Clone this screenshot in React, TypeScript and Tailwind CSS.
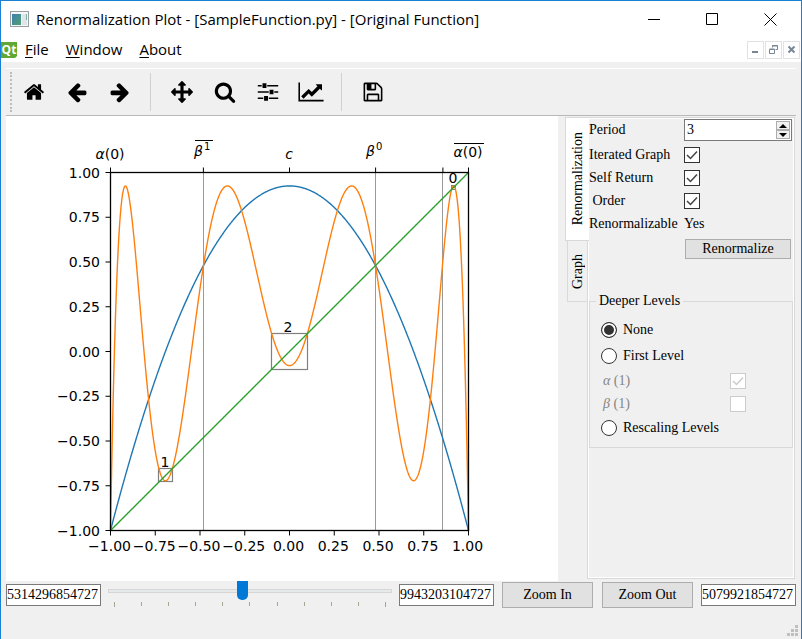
import type { ReactNode } from "react";

const AXIS = { left: 104.5, right: 462.5, top: 56.5, bottom: 414.5 };
const PEAK = 0.925;
const FIXED = 0.481;

const px = (x: number) => AXIS.left + ((x + 1) / 2) * (AXIS.right - AXIS.left);
const py = (y: number) => AXIS.bottom - ((y + 1) / 2) * (AXIS.bottom - AXIS.top);

const f = (x: number) => PEAK - (1 + PEAK) * x * x;
const f3 = (x: number) => f(f(f(x)));

function curve(fn: (x: number) => number) {
  const points: string[] = [];
  for (let i = 0; i <= 800; i++) {
    const x = -1 + i / 400;
    points.push(`${px(x).toFixed(2)},${py(fn(x)).toFixed(2)}`);
  }
  return points.join(" ");
}

const ticks = [-1, -0.75, -0.5, -0.25, 0, 0.25, 0.5, 0.75, 1];
const tickLabel = (v: number) => (v < 0 ? "\u2212" : "") + Math.abs(v).toFixed(2);

// Toolbar glyphs on a 1792 grid
const icons = {
  home: "M1472 992v480q0 26-19 45t-45 19h-384v-384h-256v384h-384q-26 0-45-19t-19-45v-480q0-1 .5-3t.5-3l575-474 575 474q1 2 1 6zm223-69l-62 74q-8 9-21 11h-3q-13 0-21-7l-692-577-692 577q-12 8-24 7-13-2-21-11l-62-74q-8-10-7-23.5t11-21.5l719-599q32-26 76-26t76 26l244 204v-195q0-14 9-23t23-9h192q14 0 23 9t9 23v408l219 182q10 8 11 21.5t-7 23.5z",
  back: "M1664 896v128q0 53-32.5 90.5t-84.5 37.5h-704l293 294q38 36 38 90t-38 90l-75 76q-37 37-90 37-52 0-91-37l-651-652q-37-37-37-90 0-52 37-91l651-650q38-38 91-38 52 0 90 38l75 74q38 38 38 91t-38 91l-293 293h704q52 0 84.5 37.5t32.5 90.5z",
  forward: "M1600 960q0 54-37 91l-651 651q-39 37-91 37-51 0-90-37l-75-75q-38-38-38-91t38-91l293-293h-704q-52 0-84.5-37.5t-32.5-90.5v-128q0-53 32.5-90.5t84.5-37.5h704l-293-294q-38-36-38-90t38-90l75-75q38-38 90-38 53 0 91 38l651 651q37 35 37 90z",
  pan: "M1792 896q0 26-19 45l-256 256q-19 19-45 19t-45-19-19-45v-128h-384v384h128q26 0 45 19t19 45-19 45l-256 256q-19 19-45 19t-45-19l-256-256q-19-19-19-45t19-45 45-19h128v-384h-384v128q0 26-19 45t-45 19-45-19l-256-256q-19-19-19-45t19-45l256-256q19-19 45-19t45 19 19 45v128h384v-384h-128q-26 0-45-19t-19-45 19-45l256-256q19-19 45-19t45 19l256 256q19 19 19 45t-19 45-45 19h-128v384h384v-128q0-26 19-45t45-19 45 19l256 256q19 19 19 45z",
  zoom: "M1216 832q0-185-131.5-316.5t-316.5-131.5-316.5 131.5-131.5 316.5 131.5 316.5 316.5 131.5 316.5-131.5 131.5-316.5zm512 832q0 52-38 90t-90 38q-54 0-90-38l-343-342q-179 124-399 124-143 0-273.5-55.5t-225-150-150-225-55.5-273.5 55.5-273.5 150-225 225-150 273.5-55.5 273.5 55.5 225 150 150 225 55.5 273.5q0 220-124 399l343 343q37 37 37 90z",
  subplots: "M64 320h320v128H64zM832 320h896v128H832zM448 192h320v384H448zM64 832h896v128H64zM1408 832h320v128h-320zM1024 704h320v384h-320zM64 1344h448v128H64zM960 1344h768v128H960zM576 1216h320v384H576z",
  axes: "M1920 1536v128h-2048v-1536h128v1408h1920zm-128-1248v435q0 21-19.5 29.5t-35.5-7.5l-121-121-633 633q-10 10-23 10t-23-10l-233-233-416 416-192-192 585-585q10-10 23-10t23 10l233 233 464-464-121-121q-16-16-7.5-35.5t29.5-19.5h435q14 0 23 9t9 23z",
  save: "M512 1536h768v-384h-768v384zm896 0h128v-896q0-14-10-38.5t-20-34.5l-281-281q-10-10-34-20t-39-10v416q0 40-28 68t-68 28h-576q-40 0-68-28t-28-68v-416h-128v1280h128v-416q0-40 28-68t68-28h832q40 0 68 28t28 68v416zm-384-928v-320q0-13-9.5-22.5t-22.5-9.5h-192q-13 0-22.5 9.5t-9.5 22.5v320q0 13 9.5 22.5t22.5 9.5h192q13 0 22.5-9.5t9.5-22.5zm640 32v928q0 40-28 68t-68 28h-1344q-40 0-68-28t-28-68v-1344q0-40 28-68t68-28h928q40 0 88 20t76 48l280 280q28 28 48 76t20 88z",
};

function ToolButton({ label, d }: { label: string; d: string }) {
  return (
    <button type="button" aria-label={label} className="flex w-[43px] items-center justify-center">
      <svg viewBox="0 0 1792 1792" className="size-[22px] overflow-visible fill-black">
        <path d={d} />
      </svg>
    </button>
  );
}

function ToolSeparator() {
  return <div className="mx-[9px] my-1 w-px bg-[#d0d0d0]" />;
}

function TitleBar() {
  return (
    <header className="flex h-9 items-center bg-white pr-[2px] pl-[9px]">
      <svg width="19" height="16" viewBox="0 0 19 16">
        <defs>
          <linearGradient id="app" x1="0" y1="0" x2="1" y2="1">
            <stop offset="0" stopColor="#3f7fb0" />
            <stop offset="1" stopColor="#4fa070" />
          </linearGradient>
        </defs>
        <rect x="0.5" y="0.5" width="18" height="15" fill="#f4f6f7" stroke="#98a0a4" />
        <rect x="2" y="3" width="9" height="11" fill="url(#app)" />
        <rect x="12" y="3" width="5" height="11" fill="#dfe6ea" />
        <rect x="16" y="3" width="1" height="6" fill="#7fb0a0" />
      </svg>
      <h1 className="ml-[7px] flex-1 whitespace-nowrap text-[15px]">
        Renormalization Plot - [SampleFunction.py] - [Original Function]
      </h1>
      <WindowButton label="Minimize">
        <path d="M0 6.5h12" />
      </WindowButton>
      <WindowButton label="Maximize">
        <path d="M0.5 0.5h11v11h-11z" />
      </WindowButton>
      <WindowButton label="Close">
        <path d="M0.5 0.5l12 12M12.5 0.5l-12 12" />
      </WindowButton>
    </header>
  );
}

function WindowButton({ label, children }: { label: string; children: ReactNode }) {
  return (
    <button type="button" aria-label={label} className="flex h-9 w-[58px] items-center justify-center">
      <svg width="13" height="13" viewBox="0 0 13 13" fill="none" stroke="#000">
        {children}
      </svg>
    </button>
  );
}

function MdiButton({ label, children }: { label: string; children: ReactNode }) {
  return (
    <button
      type="button"
      aria-label={label}
      className="flex h-[18px] w-[17px] items-center justify-center border border-[#e2e2e2]"
    >
      <svg width="9" height="9" viewBox="0 0 9 9" fill="none" stroke="#788694">
        {children}
      </svg>
    </button>
  );
}

function MenuBar() {
  return (
    <nav className="flex h-[25px] items-center bg-white pr-px text-[15px]">
      <svg width="16" height="16" viewBox="0 0 16 16" className="mr-2">
        <path d="M0 0h16v14l-2 2H0z" fill="#5fa834" />
        <text x="8" y="12" textAnchor="middle" fontSize="12" fontWeight="700" fill="#fff" fontFamily="Open Sans, sans-serif">
          Qt
        </text>
      </svg>
      <div className="flex flex-1 gap-[17px]">
        <button type="button"><u className="underline-offset-2">F</u>ile</button>
        <button type="button"><u className="underline-offset-2">W</u>indow</button>
        <button type="button"><u className="underline-offset-2">A</u>bout</button>
      </div>
      <div className="flex gap-px">
        <MdiButton label="Minimize plot"><path d="M1 7h6" strokeWidth="2" /></MdiButton>
        <MdiButton label="Restore plot">
          <path d="M0.5 4.5h5v4h-5zM3.5 2.5v-2h5v4h-2M0.5 4h5M3 1h6" />
        </MdiButton>
        <MdiButton label="Close plot"><path d="M1.5 1.5l6 6M7.5 1.5l-6 6" strokeWidth="2" /></MdiButton>
      </div>
    </nav>
  );
}

function Toolbar() {
  return (
    <div role="toolbar" className="mx-[5px] mt-[6px] flex h-12 border-t border-b border-t-white border-b-[#b8b8b8]">
      <div className="my-[3px] ml-1 w-px border-l-2 border-dotted border-[#bdbdbd]" />
      <ToolButton label="Home" d={icons.home} />
      <ToolButton label="Back" d={icons.back} />
      <ToolButton label="Forward" d={icons.forward} />
      <ToolSeparator />
      <ToolButton label="Pan" d={icons.pan} />
      <ToolButton label="Zoom" d={icons.zoom} />
      <ToolButton label="Configure subplots" d={icons.subplots} />
      <ToolButton label="Edit axes" d={icons.axes} />
      <ToolSeparator />
      <ToolButton label="Save" d={icons.save} />
    </div>
  );
}

function Plot() {
  const topTicks = [-1, -FIXED, 0, FIXED, 0.857, 1];
  return (
    <svg
      viewBox="0 0 552 465"
      className="min-w-0 flex-1 bg-white"
      fontFamily="DejaVu Sans, sans-serif"
      fontSize="14"
    >
      {/* Preimages of the fixed point */}
      <g stroke="#808080" strokeWidth="0.8">
        {[-FIXED, FIXED, 0.857].map((x) => (
          <path key={x} d={`M${Math.floor(px(x)) + 0.5} ${AXIS.top}V${AXIS.bottom}`} />
        ))}
      </g>
      <g fill="none" strokeWidth="1.4">
        <polyline points={curve(f)} stroke="#1f77b4" />
        <g stroke="#808080" strokeWidth="1.2">
          <rect x="265.5" y="217.5" width="36" height="36" />
          <rect x="152.5" y="352.5" width="14" height="13" />
          <rect x="445.5" y="69.5" width="4" height="4" strokeWidth="1" />
        </g>
        <polyline points={curve(f3)} stroke="#ff7f0e" />
        <polyline points={curve((x) => x)} stroke="#2ca02c" />
      </g>

      <g stroke="#000" fill="none">
        <rect
          x={AXIS.left}
          y={AXIS.top}
          width={AXIS.right - AXIS.left}
          height={AXIS.bottom - AXIS.top}
          strokeWidth="1.3"
        />
        {ticks.map((v) => (
          <path key={v} d={`M${px(v)} ${AXIS.bottom}v5M${AXIS.left} ${py(v)}h-5`} />
        ))}
        {topTicks.map((v) => (
          <path key={v} d={`M${px(v)} ${AXIS.top}v-5`} />
        ))}
      </g>

      {ticks.map((v) => (
        <g key={v}>
          <text x={px(v) - 1} y="435" textAnchor="middle">{tickLabel(v)}</text>
          <text x="94" y={py(v) + 5} textAnchor="end">{tickLabel(v)}</text>
        </g>
      ))}

      <g textAnchor="middle">
        <text x="282" y="216">2</text>
        <text x="159" y="351">1</text>
        <text x="447" y="67">0</text>
        <text x="104" y="43"><tspan fontStyle="italic">α</tspan>(0)</text>
        <text x="283" y="43" fontStyle="italic">c</text>
        <text x="462" y="41"><tspan fontStyle="italic">α</tspan>(0)</text>
      </g>
      <text x="188" y="40" fontStyle="italic">β</text>
      <text x="198" y="34" fontSize="10">1</text>
      <text x="360" y="40" fontStyle="italic">β</text>
      <text x="370" y="34" fontSize="10">0</text>
      <path d="M189 24.5h18M448 27.5h30" stroke="#000" />
    </svg>
  );
}

function Check({ id, checked, disabled }: { id: string; checked?: boolean; disabled?: boolean }) {
  return (
    <span className="grid size-4">
      <input
        id={id}
        type="checkbox"
        defaultChecked={checked}
        disabled={disabled}
        className="peer col-start-1 row-start-1 size-4 appearance-none border border-[#333] bg-white disabled:border-[#ccc]"
      />
      <svg
        viewBox="0 0 16 16"
        fill="none"
        strokeWidth="1.5"
        className="pointer-events-none invisible col-start-1 row-start-1 size-4 stroke-[#444] peer-checked:visible peer-disabled:stroke-[#ccc]"
      >
        <path d="M3 8l3.5 3.5L13 4.5" />
      </svg>
    </span>
  );
}

function Radio({ label, checked }: { label: string; checked?: boolean }) {
  return (
    <label className="flex h-[26px] items-center gap-[6px]">
      <input
        type="radio"
        name="levels"
        defaultChecked={checked}
        className="size-4 appearance-none rounded-full border border-[#333] bg-white checked:bg-[#333] checked:shadow-[inset_0_0_0_2px_white]"
      />
      {label}
    </label>
  );
}

function CheckRow({ id, label }: { id: string; label: string }) {
  return (
    <div className="flex h-[23px] items-center">
      <label htmlFor={id} className="w-[95px]">{label}</label>
      <Check id={id} checked />
    </div>
  );
}

function SidePanel() {
  return (
    <aside className="flex w-[230px] pt-px pb-[2px] font-['Liberation_Serif',serif] text-[14px] leading-4">
      <div role="tablist" className="flex w-[22px] flex-col items-end">
        <button
          type="button"
          role="tab"
          aria-selected="true"
          className="z-10 -mr-[2px] flex h-[124px] w-6 items-center justify-center border border-r-0 border-[#d9d9d9] bg-white"
        >
          <span className="rotate-180 [writing-mode:vertical-rl]">Renormalization</span>
        </button>
        <button
          type="button"
          role="tab"
          aria-selected="false"
          className="flex h-[61px] w-5 items-center justify-center border border-t-0 border-r-0 border-[#d9d9d9]"
        >
          <span className="rotate-180 [writing-mode:vertical-rl]">Graph</span>
        </button>
      </div>

      <div role="tabpanel" className="flex-1 border border-[#d9d9d9]">
        <div className="h-full border border-white">
          <div className="flex h-[22px] items-center">
            <label htmlFor="period" className="w-[95px]">Period</label>
            <div className="flex h-[22px] w-[108px] border border-[#7a7a7a] bg-white p-px">
              <input id="period" type="text" inputMode="numeric" defaultValue="3" className="min-w-0 flex-1 pl-px outline-none" />
              <div className="flex w-[14px] flex-col">
                <button type="button" aria-label="Increase period" className="flex flex-1 items-center justify-center border border-[#adadad] bg-[#f0f0f0]">
                  <svg width="8" height="4" viewBox="0 0 8 4"><path d="M4 0l4 4H0z" /></svg>
                </button>
                <button type="button" aria-label="Decrease period" className="flex flex-1 items-center justify-center border border-[#adadad] bg-[#f0f0f0]">
                  <svg width="8" height="4" viewBox="0 0 8 4"><path d="M4 4l4-4H0z" /></svg>
                </button>
              </div>
            </div>
          </div>
          <div className="mt-[2px]">
            <CheckRow id="iterated" label="Iterated Graph" />
            <CheckRow id="self-return" label="Self Return" />
            <CheckRow id="order" label={"\u00a0Order"} />
          </div>
          <div className="flex h-[23px] items-center">
            <span className="w-[95px]">Renormalizable</span>
            <span>Yes</span>
          </div>
          <div className="mt-1 flex justify-end pr-[2px]">
            <button type="button" className="h-5 w-[106px] border border-[#adadad] bg-[#e1e1e1]">
              Renormalize
            </button>
          </div>

          <fieldset className="mt-[34px] h-[155px] border border-[#d9d9d9] pl-[11px]">
            <legend className="-ml-[5px] px-[3px]">Deeper Levels</legend>
            <div className="mt-[8px]">
              <Radio label="None" checked />
              <Radio label="First Level" />
            </div>
            <div className="mr-[46px] ml-[2px] text-[#858585]">
              <div className="flex h-[23px] items-center justify-between">
                <label htmlFor="alpha"><i>α</i> (1)</label>
                <Check id="alpha" checked disabled />
              </div>
              <div className="flex h-[23px] items-center justify-between">
                <label htmlFor="beta"><i>β</i> (1)</label>
                <Check id="beta" disabled />
              </div>
            </div>
            <Radio label="Rescaling Levels" />
          </fieldset>
        </div>
      </div>
    </aside>
  );
}

function RangeField({ label, value }: { label: string; value: string }) {
  return (
    <input
      type="text"
      aria-label={label}
      defaultValue={value}
      className="mt-[3px] h-[22px] w-[95px] border border-[#7a7a7a] bg-white pr-[2px] text-right outline-none"
    />
  );
}

function ZoomBar() {
  return (
    <div className="flex h-7 items-start px-[5px] font-['Liberation_Serif',serif] text-[14px] leading-4">
      <RangeField label="Lower bound" value="5314296854727" />
      <div className="mx-[7px] flex-1">
        <input
          type="range"
          aria-label="Zoom position"
          min="0"
          max="1000"
          defaultValue="472"
          className="block h-5 w-full appearance-none bg-transparent [&::-webkit-slider-runnable-track]:h-1 [&::-webkit-slider-runnable-track]:border [&::-webkit-slider-runnable-track]:border-[#d6d6d6] [&::-webkit-slider-runnable-track]:bg-[#e7eaea] [&::-webkit-slider-thumb]:-mt-[9px] [&::-webkit-slider-thumb]:h-[19px] [&::-webkit-slider-thumb]:w-[11px] [&::-webkit-slider-thumb]:appearance-none [&::-webkit-slider-thumb]:rounded-b-[5px] [&::-webkit-slider-thumb]:bg-[#0078d7]"
        />
        <div className="mt-px flex justify-between px-[6px]">
          {ticks.concat(1.25, 1.5).map((t, i) => (
            <span key={t} className={i % 10 === 0 ? "h-[5px] w-px bg-[#a9a595]" : "h-1 w-px bg-[#a9a595]"} />
          ))}
        </div>
      </div>
      <RangeField label="Center" value="9943203104727" />
      <button type="button" className="mt-px ml-2 h-[26px] w-[91px] border border-[#adadad] bg-[#e1e1e1]">
        Zoom In
      </button>
      <button type="button" className="mt-px mr-2 ml-[9px] h-[26px] w-[91px] border border-[#adadad] bg-[#e1e1e1]">
        Zoom Out
      </button>
      <RangeField label="Upper bound" value="5079921854727" />
    </div>
  );
}

export default function App() {
  return (
    <div className="flex min-h-screen flex-col border border-[#1a80d4] bg-[#f0f0f0] font-['Open_Sans',sans-serif] text-black">
      <TitleBar />
      <MenuBar />
      <Toolbar />
      <main className="flex min-h-0 flex-1 gap-[7px] pr-[6px] pl-[5px]">
        <Plot />
        <SidePanel />
      </main>
      <ZoomBar />
      <footer className="flex h-[30px] items-end justify-end p-[3px]">
        <svg width="11" height="11" viewBox="0 0 11 11" fill="#bfbfbf">
          <path d="M0 8h3v3H0zM4 8h3v3H4zM8 8h3v3H8zM4 4h3v3H4zM8 4h3v3H8zM8 0h3v3H8z" />
        </svg>
      </footer>
    </div>
  );
}
